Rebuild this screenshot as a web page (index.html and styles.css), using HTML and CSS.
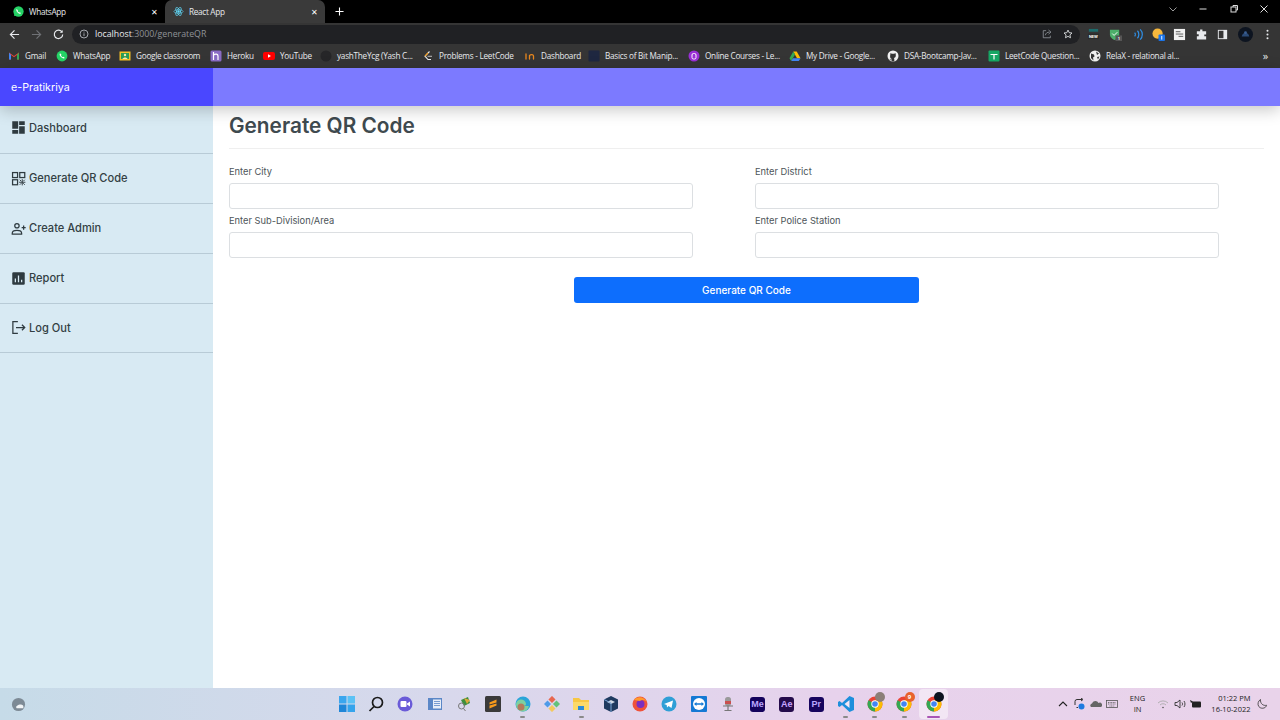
FILE: index.html
```html
<!DOCTYPE html>
<html lang="en">
<head>
    <meta charset="UTF-8">
    <meta name="viewport" content="width=device-width, initial-scale=1.0">
    <title>React App</title>
    <link rel="stylesheet" href="styles.css">
</head>
<body>
    <div class="tabstrip">
        <div class="tab">
            <svg class="tab-icon" viewBox="0 0 12 12"><circle cx="6" cy="6" r="5.6" fill="#25d366"/><path d="M1 11l.8-3 2 2z" fill="#25d366"/><path d="M4 3.2c-1 1 0 2.800 1 3.800s2.800 2 3.800 1l-1.200-1.200-.8.400c-.6-.3-1.500-1.200-1.800-1.800l.4-.8z" fill="#fff"/></svg>
            <span class="tab-title">WhatsApp</span>
            <span class="tab-close">&#10005;</span>
        </div>
        <div class="tab tab-active">
            <svg class="tab-icon" viewBox="0 0 12 12" fill="none" stroke="#61dafb" stroke-width=".7"><circle cx="6" cy="6" r="1" fill="#61dafb"/><ellipse cx="6" cy="6" rx="5" ry="2"/><ellipse cx="6" cy="6" rx="5" ry="2" transform="rotate(60 6 6)"/><ellipse cx="6" cy="6" rx="5" ry="2" transform="rotate(120 6 6)"/></svg>
            <span class="tab-title">React App</span>
            <span class="tab-close">&#10005;</span>
        </div>
        <svg class="new-tab" viewBox="0 0 10 10" stroke="#fff" stroke-width="1.200"><path d="M5 .5v9M.5 5h9"/></svg>
        <div class="window-btns">
            <svg viewBox="0 0 10 10" fill="none" stroke="#9a9a9a"><path d="M1.500 3.500L5 7l3.500-3.500"/></svg>
            <svg viewBox="0 0 10 10" stroke="#ddd"><path d="M1.500 5h7"/></svg>
            <svg viewBox="0 0 10 10" fill="none" stroke="#ddd"><rect x="2" y="3" width="5" height="5"/><path d="M4 3V1.500h4.500V6H7"/></svg>
            <svg viewBox="0 0 10 10" stroke="#ddd"><path d="M1.500 1.500l7 7M8.500 1.500l-7 7"/></svg>
        </div>
    </div>

    <div class="toolbar">
        <svg class="nav-icon" viewBox="0 0 12 12" fill="none" stroke="#e8eaed" stroke-width="1.300"><path d="M11 6H1.500M6 1.500L1.500 6 6 10.500"/></svg>
        <svg class="nav-icon" viewBox="0 0 12 12" fill="none" stroke="#6f7175" stroke-width="1.300"><path d="M1 6h9.500M6 1.500L10.500 6 6 10.500"/></svg>
        <svg class="nav-icon" viewBox="0 0 12 12" fill="none" stroke="#e8eaed" stroke-width="1.300"><path d="M10 3.500A4.600 4.600 0 1 0 10.600 6"/><path d="M10.500 1v3.200H7.300" fill="#e8eaed" stroke="none"/></svg>
        <div class="omnibox">
            <svg class="info-icon" viewBox="0 0 12 12" fill="none" stroke="#bdc1c6"><circle cx="6" cy="6" r="4.800"/><path d="M6 5.200v3.300M6 3.200v1"/></svg>
            <span class="url-host">localhost</span><span class="url-path">:3000/generateQR</span>
            <svg class="omni-icon omni-share" viewBox="0 0 12 12" fill="none" stroke="#9aa0a6" stroke-width=".9"><path d="M5 2H1.500v8.500h8.500V8"/><path d="M4 7.500c.3-2.500 2.500-3.800 5-3.800M7.800 1.200l3 2.500-3 2.500"/></svg>
            <svg class="omni-icon" viewBox="0 0 12 12" fill="none" stroke="#e8eaed"><path d="M6 1.300l1.400 3.100 3.400.4-2.500 2.300.7 3.400L6 8.800l-3 1.700.7-3.400L1.200 4.800l3.400-.4z"/></svg>
        </div>
        <div class="extensions">
            <svg viewBox="0 0 14 14"><rect x="2" y="1" width="10" height="3" fill="#1d6b6b"/><rect x="1" y="6" width="12" height="6" fill="#2b2b2b"/><text x="7" y="11" class="ext-text">NEW</text></svg>
            <svg viewBox="0 0 14 14"><path d="M1 2h10v5c0 3-3 5-5 6-2-1-5-3-5-6z" fill="#4caf6a"/><path d="M3.500 6l2 2 3.500-3.500" fill="none" stroke="#fff"/><rect x="7" y="8" width="7" height="6" fill="#555"/><text x="10.500" y="13" class="ext-text">1</text></svg>
            <svg viewBox="0 0 14 14" fill="none" stroke="#2f8ee5" stroke-width="1.300"><path d="M5 5c1 1 1 3 0 4M8 3c2 2 2 6 0 8M11 1.500c3 3 3 8 0 11"/></svg>
            <svg viewBox="0 0 14 14"><circle cx="6" cy="6" r="5.500" fill="#f6b73c"/><rect x="7" y="7" width="7" height="7" rx="1" fill="#1a73e8"/><path d="M10.500 8.500v4" stroke="#fff"/></svg>
            <svg viewBox="0 0 14 14"><rect x="1" y="1" width="12" height="12" fill="#f1f1f1"/><path d="M3 4h5M3 6.500h8M6 9h5" stroke="#555"/></svg>
            <svg viewBox="0 0 14 14" fill="#e8eaed"><path d="M5.500 1.500h2.500v2h4v3.500h-2v2h2v3.500H2V8.800h2v-2H2V3.500h3.500z"/></svg>
            <svg viewBox="0 0 14 14"><rect x="2" y="2" width="10" height="10" fill="#e8eaed"/><rect x="3" y="3" width="5" height="8" fill="#353535"/></svg>
            <svg class="avatar" viewBox="0 0 16 16"><circle cx="8" cy="8" r="8" fill="#0d1420"/><path d="M4 10c1-5 7-5 8 0z" fill="#2b4b78"/><circle cx="8" cy="6" r="1.500" fill="#3a5f94"/></svg>
            <svg viewBox="0 0 14 14" fill="#e8eaed"><circle cx="7" cy="3" r="1.100"/><circle cx="7" cy="7" r="1.100"/><circle cx="7" cy="11" r="1.100"/></svg>
        </div>
    </div>

    <div class="bookmarks">
        <div class="bm-list">
            <a class="bm"><svg viewBox="0 0 12 12"><path d="M1 2.500v7h2V5l3 2.300L9 5v4.500h2v-7L6 6z" fill="#ea4335"/><path d="M1 2.500v7h2V5z" fill="#4285f4"/><path d="M9 5v4.500h2v-7z" fill="#34a853"/></svg>Gmail</a>
            <a class="bm"><svg viewBox="0 0 12 12"><circle cx="6" cy="6" r="5.400" fill="#25d366"/><path d="M4 3.200c-1 1 0 2.800 1 3.800s2.800 2 3.800 1l-1.200-1.200-.8.400c-.6-.3-1.500-1.200-1.800-1.800l.4-.8z" fill="#fff"/></svg>WhatsApp</a>
            <a class="bm"><svg viewBox="0 0 12 12"><rect x=".5" y="1.500" width="11" height="9" fill="#f6c026"/><rect x="2" y="3" width="8" height="6" fill="#2a9d55"/><circle cx="6" cy="5" r="1.200" fill="#f6e9b0"/><path d="M3.500 9c.3-2 4.700-2 5 0z" fill="#f6e9b0"/></svg>Google classroom</a>
            <a class="bm"><svg viewBox="0 0 12 12"><rect x=".5" y=".5" width="11" height="11" rx="1.500" fill="#8a6cc4"/><path d="M3.500 2v8M3.500 5c2-1.500 4.500-1 4.500 1v4" fill="none" stroke="#fff" stroke-width="1.200"/></svg>Heroku</a>
            <a class="bm"><svg viewBox="0 0 12 12"><rect y="2" width="12" height="8" rx="2" fill="#f00"/><path d="M5 4.200v3.600L8 6z" fill="#fff"/></svg>YouTube</a>
            <a class="bm"><svg viewBox="0 0 12 12"><circle cx="6" cy="6" r="5.500" fill="#262628"/></svg>yashTheYcg (Yash C...</a>
            <a class="bm"><svg viewBox="0 0 12 12" fill="none" stroke-width="1.100"><path d="M7.500 1.500L3 6.200l3 3.300h3" stroke="#e8eaed"/><path d="M5.500 6.300h4.500" stroke="#b3b3b3"/><path d="M3 6.200l3-3.200" stroke="#f89f1b"/></svg>Problems - LeetCode</a>
            <a class="bm"><svg viewBox="0 0 12 12" fill="none" stroke="#e8871e" stroke-width="1.300"><path d="M2 4v5M5.500 9V5.500c1.500-1.500 4-1 4 .5v3" stroke-linecap="round"/></svg>Dashboard</a>
            <a class="bm"><svg viewBox="0 0 12 12"><rect x=".5" y=".5" width="11" height="11" rx="1" fill="#1e2740"/></svg>Basics of Bit Manip...</a>
            <a class="bm"><svg viewBox="0 0 12 12"><circle cx="6" cy="6" r="5.500" fill="#9a2fd6"/><rect x="4" y="3.500" width="4" height="5.500" rx="1.500" fill="none" stroke="#fff"/></svg>Online Courses - Le...</a>
            <a class="bm"><svg viewBox="0 0 12 12"><path d="M4.300 1.500h3.400l3.800 6.700H8z" fill="#fbbc04"/><path d="M4.300 1.500L.5 8.200l1.700 2.800L6 4.500z" fill="#34a853"/><path d="M2.200 11h7.600l1.700-2.800H4z" fill="#4285f4"/></svg>My Drive - Google...</a>
            <a class="bm"><svg viewBox="0 0 12 12"><circle cx="6" cy="6" r="5.500" fill="#f1f1f1"/><path d="M3.500 3l1.300.7h2.400L8.500 3l.3 2c.3 2-1 2.800-2 3 .4.300.5.700.5 1.200v2h-2.600v-1c-1.500.300-2-.5-2.300-1.200.8.300 1.300.8 2.300.5 0-.3.100-.5.300-.6-1-.2-2.100-1-1.900-3z" fill="#353535"/></svg>DSA-Bootcamp-Jav...</a>
            <a class="bm"><svg viewBox="0 0 12 12"><rect x=".5" y=".5" width="11" height="11" rx="1" fill="#16a765"/><path d="M2.500 4.500h7M6 4.500v5" stroke="#fff" stroke-width="1.200"/></svg>LeetCode Question...</a>
            <a class="bm"><svg viewBox="0 0 12 12"><circle cx="6" cy="6" r="5.500" fill="#f1f1f1"/><path d="M2 3.500l3 1 .5 2-1.500 1 .5 3L2 8zM7 1.500l3 2-2 1.500zM8 7l2.500-.5L9 9.500z" fill="#353535"/></svg>RelaX - relational al...</a>
        </div>
        <span class="bm-more">&raquo;</span>
    </div>

    <div class="app">
        <header class="app-header">
            <div class="brand">e-Pratikriya</div>
        </header>
        <div class="app-body">
            <nav class="sidebar">
                <a class="nav-item">
                    <svg viewBox="0 0 24 24" fill="#2f3b40"><path d="M2 2h9.500v12H2zM2 16h9.500v6H2zM13 2h9v6h-9zM13 10h9v12h-9z"/></svg>
                    Dashboard
                </a>
                <a class="nav-item">
                    <svg viewBox="0 0 24 24" fill="none" stroke="#2f3b40" stroke-width="2"><rect x="2.500" y="2.500" width="8" height="8"/><rect x="14" y="2.500" width="8" height="8"/><rect x="2.500" y="14" width="8" height="8"/><path d="M14 14l2.500 2.500M22 14l-2.500 2.500M14 22l2.500-2.500M22 22l-2.500-2.500M18 13v10M13 18h10" stroke-width="1.500"/></svg>
                    Generate QR Code
                </a>
                <a class="nav-item">
                    <svg viewBox="0 0 24 24" fill="none" stroke="#2f3b40" stroke-width="2"><circle cx="9.500" cy="7.500" r="3.500"/><path d="M2 21v-1.500c0-3 4-4.500 7.500-4.500s7.500 1.500 7.500 4.500V21zM17 10.500h6.500M20.200 7v7"/></svg>
                    Create Admin
                </a>
                <a class="nav-item">
                    <svg viewBox="0 0 24 24"><rect x="2" y="2" width="20" height="20" rx="2" fill="#2f3b40"/><path d="M7 12v6M12 7v11M17 14v4" stroke="#d8eaf3" stroke-width="2"/></svg>
                    Report
                </a>
                <a class="nav-item">
                    <svg viewBox="0 0 24 24" fill="none" stroke="#2f3b40" stroke-width="2"><path d="M11 2.500H3v19h8M8 12h14M17.500 7.500L22 12l-4.500 4.500"/></svg>
                    Log Out
                </a>
            </nav>
            <main class="content">
                <h1 class="page-title">Generate QR Code</h1>
                <form class="qr-form">
                    <div class="field">
                        <label for="city">Enter City</label>
                        <input type="text" id="city">
                    </div>
                    <div class="field">
                        <label for="district">Enter District</label>
                        <input type="text" id="district">
                    </div>
                    <div class="field">
                        <label for="area">Enter Sub-Division/Area</label>
                        <input type="text" id="area">
                    </div>
                    <div class="field">
                        <label for="station">Enter Police Station</label>
                        <input type="text" id="station">
                    </div>
                    <button type="submit" class="submit-btn">Generate QR Code</button>
                </form>
            </main>
        </div>
    </div>

    <div class="taskbar">
        <div class="task-left">
            <svg viewBox="0 0 16 16"><circle cx="8" cy="8" r="7" fill="#7d8a95"/><path d="M6 12c-2-2 2-4 4-4s4 1 3 4z" fill="#f1f4f6"/></svg>
        </div>
        <div class="task-apps">
            <span class="app-icon"><svg viewBox="0 0 16 16"><path d="M0 0h7.500v7.500H0z" fill="#3aa6ee"/><path d="M8.500 0H16v7.500H8.500z" fill="#5cc2f5"/><path d="M0 8.500h7.500V16H0z" fill="#1f86d8"/><path d="M8.500 8.500H16V16H8.500z" fill="#35a4ec"/></svg></span>
            <span class="app-icon"><svg viewBox="0 0 16 16" fill="none" stroke="#1a1a1a" stroke-width="1.700"><circle cx="9.500" cy="6.500" r="5"/><path d="M6 10.500L1.500 15"/></svg></span>
            <span class="app-icon"><svg viewBox="0 0 16 16"><circle cx="8" cy="8" r="7.500" fill="#6a5bd8"/><rect x="3.500" y="5" width="6" height="6" rx="1" fill="#fff"/><path d="M10 7.500l3-2v5l-3-2z" fill="#fff"/></svg></span>
            <span class="app-icon"><svg viewBox="0 0 16 16"><rect x="1" y="2" width="14" height="12" fill="#5b87c7"/><rect x="6" y="3.500" width="8" height="9" fill="#e8eef8"/><path d="M7 5.500h6M7 7.500h6M7 9.500h6" stroke="#5b87c7" stroke-width=".8"/></svg></span>
            <span class="app-icon"><svg viewBox="0 0 16 16"><path d="M5 4l7-3 2 6-6 3z" fill="#3c8f3c"/><path d="M8 2l6 2-3 4z" fill="#d8a93c"/><circle cx="5.500" cy="10" r="3" fill="none" stroke="#777"/><path d="M7.500 12.500l2 2.500" stroke="#777"/></svg></span>
            <span class="app-icon"><svg viewBox="0 0 16 16"><rect width="16" height="16" rx="1.500" fill="#3a3a3a"/><path d="M11.500 3.500L4.500 6.500v2l7 -2zM4.500 12.500l7-3v-2l-7 2z" fill="#f89b1c"/></svg></span>
            <span class="app-icon app-open"><svg viewBox="0 0 16 16"><circle cx="8" cy="8" r="7.500" fill="#2aa5d9"/><path d="M1 9a5 5 0 0 1 10-1c0 1-1 2-3 2h6c-1 3-3 5.500-6 5.500A7 7 0 0 1 1 9z" fill="#7ed0a0"/><circle cx="6" cy="11" r="3.500" fill="#b47b5c"/></svg></span>
            <span class="app-icon"><svg viewBox="0 0 16 16"><rect x="5.500" y="1" width="5" height="5" transform="rotate(45 8 3.500)" fill="#e8674f"/><rect x="1" y="5.500" width="5" height="5" transform="rotate(45 3.500 8)" fill="#4f9be8"/><rect x="10" y="5.500" width="5" height="5" transform="rotate(45 12.500 8)" fill="#62c27b"/><rect x="5.500" y="10" width="5" height="5" transform="rotate(45 8 12.500)" fill="#f4c95d"/></svg></span>
            <span class="app-icon app-open"><svg viewBox="0 0 16 16"><path d="M0 2h6l2 2h8v10H0z" fill="#f7c744"/><rect y="6" width="16" height="8" fill="#fbd968"/><rect x="5" y="10" width="6" height="4" fill="#2a8bd8"/></svg></span>
            <span class="app-icon"><svg viewBox="0 0 16 16"><path d="M8 0l7 3.500v9L8 16l-7-3.500v-9z" fill="#1f3a5f"/><path d="M8 4l4 2-4 2-4-2z" fill="#cfd8e3"/><path d="M1 3.500L8 7v9" fill="none" stroke="#7ba6d8"/></svg></span>
            <span class="app-icon"><svg viewBox="0 0 16 16"><circle cx="8" cy="8" r="7.500" fill="#f0523a"/><circle cx="8.500" cy="8" r="4" fill="#7b2fbf"/><path d="M2 4c3-4 10-4 13 2-2-2-5-3-7-1z" fill="#ff9a2e"/></svg></span>
            <span class="app-icon"><svg viewBox="0 0 16 16"><circle cx="8" cy="8" r="7.500" fill="#2f9fd6"/><path d="M3 8l9-3.500-1.500 7.500-3-2-1.500 1.500-.3-2.500z" fill="#fff"/></svg></span>
            <span class="app-icon"><svg viewBox="0 0 16 16"><rect width="16" height="16" rx="1" fill="#1479d4"/><circle cx="8" cy="8" r="6" fill="#fff"/><path d="M3 8l2.500-2v1.300h5V6L13 8l-2.500 2V8.700h-5V10z" fill="#1479d4"/></svg></span>
            <span class="app-icon"><svg viewBox="0 0 16 16"><rect x="5" y="1" width="6" height="9" rx="2.500" fill="#9a9a9a"/><rect x="5" y="5" width="6" height="3" fill="#c94f4f"/><path d="M3 10h10M8 10v4M4.500 14.500h7" stroke="#777" stroke-width="1.200"/></svg></span>
            <span class="app-icon"><span class="adobe adobe-me">Me</span></span>
            <span class="app-icon"><span class="adobe adobe-ae">Ae</span></span>
            <span class="app-icon"><span class="adobe adobe-pr">Pr</span></span>
            <span class="app-icon app-open"><svg viewBox="0 0 16 16"><path d="M11.500 0L16 2v12l-4.500 2L4 9 1.500 11 0 10V6l1.500-1L4 7z" fill="#1e8fdc"/><path d="M11.500 4L6.500 8l5 4z" fill="#f5e6f4"/></svg></span>
            <span class="app-icon app-open">
                <svg class="chrome" viewBox="0 0 16 16"><circle cx="8" cy="8" r="7.500" fill="#ea4335"/><path d="M8 8L1.500 4.300A7.500 7.500 0 0 0 8 15.500l3.800-6.500z" fill="#34a853"/><path d="M8 15.500A7.500 7.500 0 0 0 14.500 4.300H8z" fill="#fbbc04"/><circle cx="8" cy="8" r="3.700" fill="#fff"/><circle cx="8" cy="8" r="2.800" fill="#4285f4"/></svg>
                <span class="badge badge-photo"></span>
            </span>
            <span class="app-icon app-open">
                <svg class="chrome" viewBox="0 0 16 16"><circle cx="8" cy="8" r="7.500" fill="#ea4335"/><path d="M8 8L1.500 4.300A7.500 7.500 0 0 0 8 15.500l3.800-6.500z" fill="#34a853"/><path d="M8 15.500A7.500 7.500 0 0 0 14.500 4.300H8z" fill="#fbbc04"/><circle cx="8" cy="8" r="3.700" fill="#fff"/><circle cx="8" cy="8" r="2.800" fill="#4285f4"/></svg>
                <span class="badge badge-count">9</span>
            </span>
            <span class="app-icon app-active">
                <svg class="chrome" viewBox="0 0 16 16"><circle cx="8" cy="8" r="7.500" fill="#ea4335"/><path d="M8 8L1.500 4.300A7.500 7.500 0 0 0 8 15.500l3.800-6.500z" fill="#34a853"/><path d="M8 15.500A7.500 7.500 0 0 0 14.500 4.300H8z" fill="#fbbc04"/><circle cx="8" cy="8" r="3.700" fill="#fff"/><circle cx="8" cy="8" r="2.800" fill="#4285f4"/></svg>
                <span class="badge badge-dark"></span>
            </span>
        </div>
        <div class="tray">
            <svg class="tray-icon" viewBox="0 0 12 12" fill="none" stroke="#222" stroke-width="1.100"><path d="M2 8l4-4 4 4"/></svg>
            <svg class="tray-icon" viewBox="0 0 12 12" fill="none" stroke="#333"><path d="M2 7V3.500A2 2 0 0 1 4 1.500h5M5 9.500H3.500"/><path d="M8 0l2 1.500L8 3" /><circle cx="8.500" cy="8.500" r="3" fill="#1f7ae0" stroke="none"/></svg>
            <svg class="tray-icon" viewBox="0 0 12 12"><path d="M1 9a2 2 0 0 1 1-3.500 3.500 3.500 0 0 1 6.500-.5A2.300 2.300 0 0 1 11 9z" fill="#666"/></svg>
            <svg class="tray-icon" viewBox="0 0 12 12" fill="none" stroke="#555" stroke-width=".8"><rect x=".5" y="2.500" width="11" height="7"/><path d="M2 4.500h8M2 6h8M3.500 8h5" stroke-dasharray="1 .6"/></svg>
            <div class="tray-lang"><span>ENG</span><span>IN</span></div>
            <svg class="tray-icon" viewBox="0 0 12 12" fill="none" stroke="#aaa" stroke-width=".9"><path d="M1 5a7 7 0 0 1 10 0M3 7a4.200 4.200 0 0 1 6 0"/><circle cx="6" cy="9.500" r=".8" fill="#555" stroke="none"/></svg>
            <svg class="tray-icon" viewBox="0 0 12 12" fill="none" stroke="#333" stroke-width=".9"><path d="M1 4.500h2L6 2v8L3 7.500H1zM8 4.500c.7 1 .7 2 0 3M10 3c1.300 2 1.300 4 0 6"/></svg>
            <svg class="tray-icon" viewBox="0 0 12 12"><rect x="2" y="3.500" width="9" height="6" rx="1" fill="#222"/><path d="M0 2l3 1.500L1 5z" fill="#222"/></svg>
            <div class="tray-clock"><span>01:22 PM</span><span>16-10-2022</span></div>
            <svg class="tray-icon" viewBox="0 0 12 12" fill="none" stroke="#333" stroke-width=".8"><path d="M4.500 1.500C2 3 1.500 6 2.500 8s4 3 6.500 1.500c1-.7 1.500-1.500 1.500-2.300-3 1-6.500-1.500-6-5.700z"/></svg>
        </div>
    </div>
</body>
</html>
```

FILE: styles.css
```css
* {
    box-sizing: border-box;
}

html, body {
    height: 100%;
}

body {
    margin: 0;
    display: flex;
    flex-direction: column;
    height: 720px;
    overflow: hidden;
    background-color: #ffffff;
    font-family: Inter, sans-serif;
}

/* browser chrome */
.tabstrip {
    display: flex;
    align-items: flex-end;
    height: 23px;
    background-color: #000000;
    color: #e8eaed;
    font-family: "Open Sans", sans-serif;
    font-size: 8.2px;
    letter-spacing: -0.3px;
}

.tab {
    display: flex;
    align-items: center;
    width: 165px;
    height: 23px;
    padding: 0 5px 0 13px;
}

.tab-active {
    width: 160px;
    padding-left: 8px;
    background-color: #3a3a3a;
    border-radius: 7px 7px 0 0;
}

.tab-icon {
    width: 11px;
    height: 11px;
    margin-right: 5px;
}

.tab-active .tab-icon {
    margin-right: 5px;
    margin-left: 0;
}

.tab-title {
    flex: 1;
}

.tab-close {
    font-size: 8px;
    width: 12px;
    text-align: center;
    color: #ffffff;
}

.new-tab {
    width: 9px;
    height: 9px;
    margin: 0 0 7px 10px;
}

.window-btns {
    display: flex;
    gap: 20.500px;
    margin-left: auto;
    padding: 0 11px 9px 0;
}

.window-btns svg {
    width: 10px;
    height: 10px;
}

.toolbar {
    display: flex;
    align-items: center;
    height: 22px;
    padding: 0 6px 0 9px;
    background-color: #353535;
}

.nav-icon {
    width: 11px;
    height: 11px;
    margin-right: 11px;
}

.omnibox {
    display: flex;
    align-items: center;
    width: 1008px;
    height: 19px;
    margin-left: -3px;
    padding: 0 7px;
    border-radius: 10px;
    background-color: #202124;
    font-family: "Open Sans", sans-serif;
    font-size: 8.8px;
}

.info-icon {
    width: 10px;
    height: 10px;
    margin-right: 6px;
}

.url-host {
    color: #e8eaed;
}

.url-path {
    color: #8f9296;
}

.omni-icon {
    width: 10px;
    height: 10px;
    margin-left: 11px;
}

.omni-share {
    margin-left: auto;
}

.extensions {
    display: flex;
    align-items: center;
    justify-content: space-between;
    flex: 1;
    padding-left: 7px;
}

.extensions svg {
    width: 13px;
    height: 13px;
}

.extensions .avatar {
    width: 15px;
    height: 15px;
}

.ext-text {
    fill: #ffffff;
    font-size: 4px;
    font-weight: 700;
    text-anchor: middle;
}

.bookmarks {
    display: flex;
    align-items: center;
    justify-content: space-between;
    height: 23px;
    padding: 0 12px 2px 8px;
    background-color: #353535;
    color: #e8eaed;
    font-family: "Open Sans", sans-serif;
    font-size: 8.2px;
    letter-spacing: -0.25px;
}

.bm-list {
    display: grid;
    grid-template-columns: 48px 63px 91px 53px 57px 102px 102px 64px 100px 101px 98px 101px 101px 100px;
}

.bm {
    display: flex;
    align-items: center;
    gap: 5px;
    white-space: nowrap;
}

.bm svg {
    width: 12px;
    height: 12px;
    flex-shrink: 0;
}

.bm-more {
    font-size: 11px;
}

/* react app */
.app {
    display: flex;
    flex-direction: column;
    flex: 1;
    min-height: 0;
}

.app-header {
    position: relative;
    z-index: 1;
    height: 38px;
    background-color: #7c7aff;
    box-shadow: 0 4px 16px rgba(0, 0, 0, 0.22);
}

.brand {
    width: 213px;
    height: 38px;
    padding: 1px 11px 0;
    background-color: #4a47ff;
    color: #ffffff;
    font-size: 10.700px;
    line-height: 37px;
}

.app-body {
    display: flex;
    flex: 1;
    min-height: 0;
}

.sidebar {
    width: 213px;
    background-color: #d8eaf3;
}

.nav-item {
    display: flex;
    align-items: center;
    gap: 3px;
    height: 50px;
    padding: 0 11px 1px;
    border-bottom: 1px solid #b8cbd6;
    color: #333f44;
    font-size: 11.100px;
    font-weight: 500;
}

.nav-item:first-child {
    height: 48px;
    padding-bottom: 4px;
}

.nav-item:last-child {
    height: 49px;
}

.nav-item svg {
    width: 15px;
    height: 15px;
}

.content {
    flex: 1;
    padding: 0 16px;
}

.page-title {
    margin: 0;
    height: 43px;
    padding-top: 6px;
    border-bottom: 1px solid #efefef;
    color: #3f4a4f;
    font-size: 20.800px;
    font-weight: 600;
    line-height: 27px;
}

.qr-form {
    display: grid;
    grid-template-columns: 464px 464px;
    column-gap: 62px;
    padding-top: 17px;
}

.field {
    display: flex;
    flex-direction: column;
    height: 48.500px;
}

.field label {
    height: 17px;
    color: #4d5559;
    font-size: 9.300px;
    line-height: 12px;
}

.field input {
    height: 26px;
    padding: 0 8px;
    border: 1px solid #dcdfe2;
    border-radius: 3px;
    background-color: #ffffff;
}

.submit-btn {
    grid-column: 1 / 3;
    justify-self: start;
    width: 345px;
    height: 26px;
    margin-top: 14px;
    margin-left: 345px;
    border: none;
    border-radius: 3px;
    background-color: #0d6efd;
    color: #ffffff;
    font-family: inherit;
    font-size: 10px;
    font-weight: 500;
}

/* windows taskbar */
.taskbar {
    display: flex;
    align-items: center;
    height: 32px;
    background: linear-gradient(90deg, #c6dbe8 0%, #d8d8ec 35%, #e7d2ec 65%, #e9d3ea 100%);
    color: #222222;
    font-family: "Open Sans", sans-serif;
}

.task-left {
    width: 332px;
    padding-left: 11px;
}

.task-left svg {
    display: block;
    width: 15px;
    height: 15px;
}

.task-apps {
    display: flex;
}

.app-icon {
    position: relative;
    display: flex;
    align-items: center;
    justify-content: center;
    width: 29.350px;
    height: 30px;
}

.app-icon svg {
    width: 16px;
    height: 16px;
}

.app-open::after,
.app-active::after {
    content: "";
    position: absolute;
    bottom: 1px;
    left: 12px;
    width: 5px;
    height: 2px;
    border-radius: 1px;
    background-color: #8a8a8a;
}

.app-active {
    border-radius: 4px;
    background-color: rgba(255, 255, 255, 0.45);
}

.app-active::after {
    left: 8px;
    width: 13px;
    background-color: #a855b5;
}

.adobe {
    display: block;
    width: 15px;
    height: 15px;
    border-radius: 3px;
    font-family: "Liberation Sans", sans-serif;
    font-size: 9px;
    font-weight: 700;
    line-height: 15px;
    text-align: center;
}

.adobe-me {
    background-color: #14025c;
    color: #b9a6ff;
}

.adobe-ae {
    background-color: #250b4b;
    color: #c9a6ff;
}

.adobe-pr {
    background-color: #17045e;
    color: #b9a6ff;
}

.badge {
    position: absolute;
    top: 3px;
    left: 15px;
    width: 10px;
    height: 10px;
    border-radius: 50%;
}

.badge-photo {
    background-color: #8b7f78;
}

.badge-count {
    background-color: #e8622c;
    color: #ffffff;
    font-size: 6px;
    font-weight: 700;
    line-height: 10px;
    text-align: center;
}

.badge-dark {
    background-color: #0d1420;
}

.tray {
    display: flex;
    align-items: center;
    margin-left: auto;
    padding-right: 12px;
    gap: 4.500px;
}

.tray-icon {
    width: 12px;
    height: 12px;
}

.tray-lang {
    display: flex;
    flex-direction: column;
    align-items: center;
    width: 30px;
    font-size: 7.500px;
    line-height: 11.500px;
}

.tray-clock {
    display: flex;
    flex-direction: column;
    align-items: flex-end;
    width: 44px;
    margin-right: 1px;
    font-size: 7.500px;
    line-height: 11.500px;
}
```
